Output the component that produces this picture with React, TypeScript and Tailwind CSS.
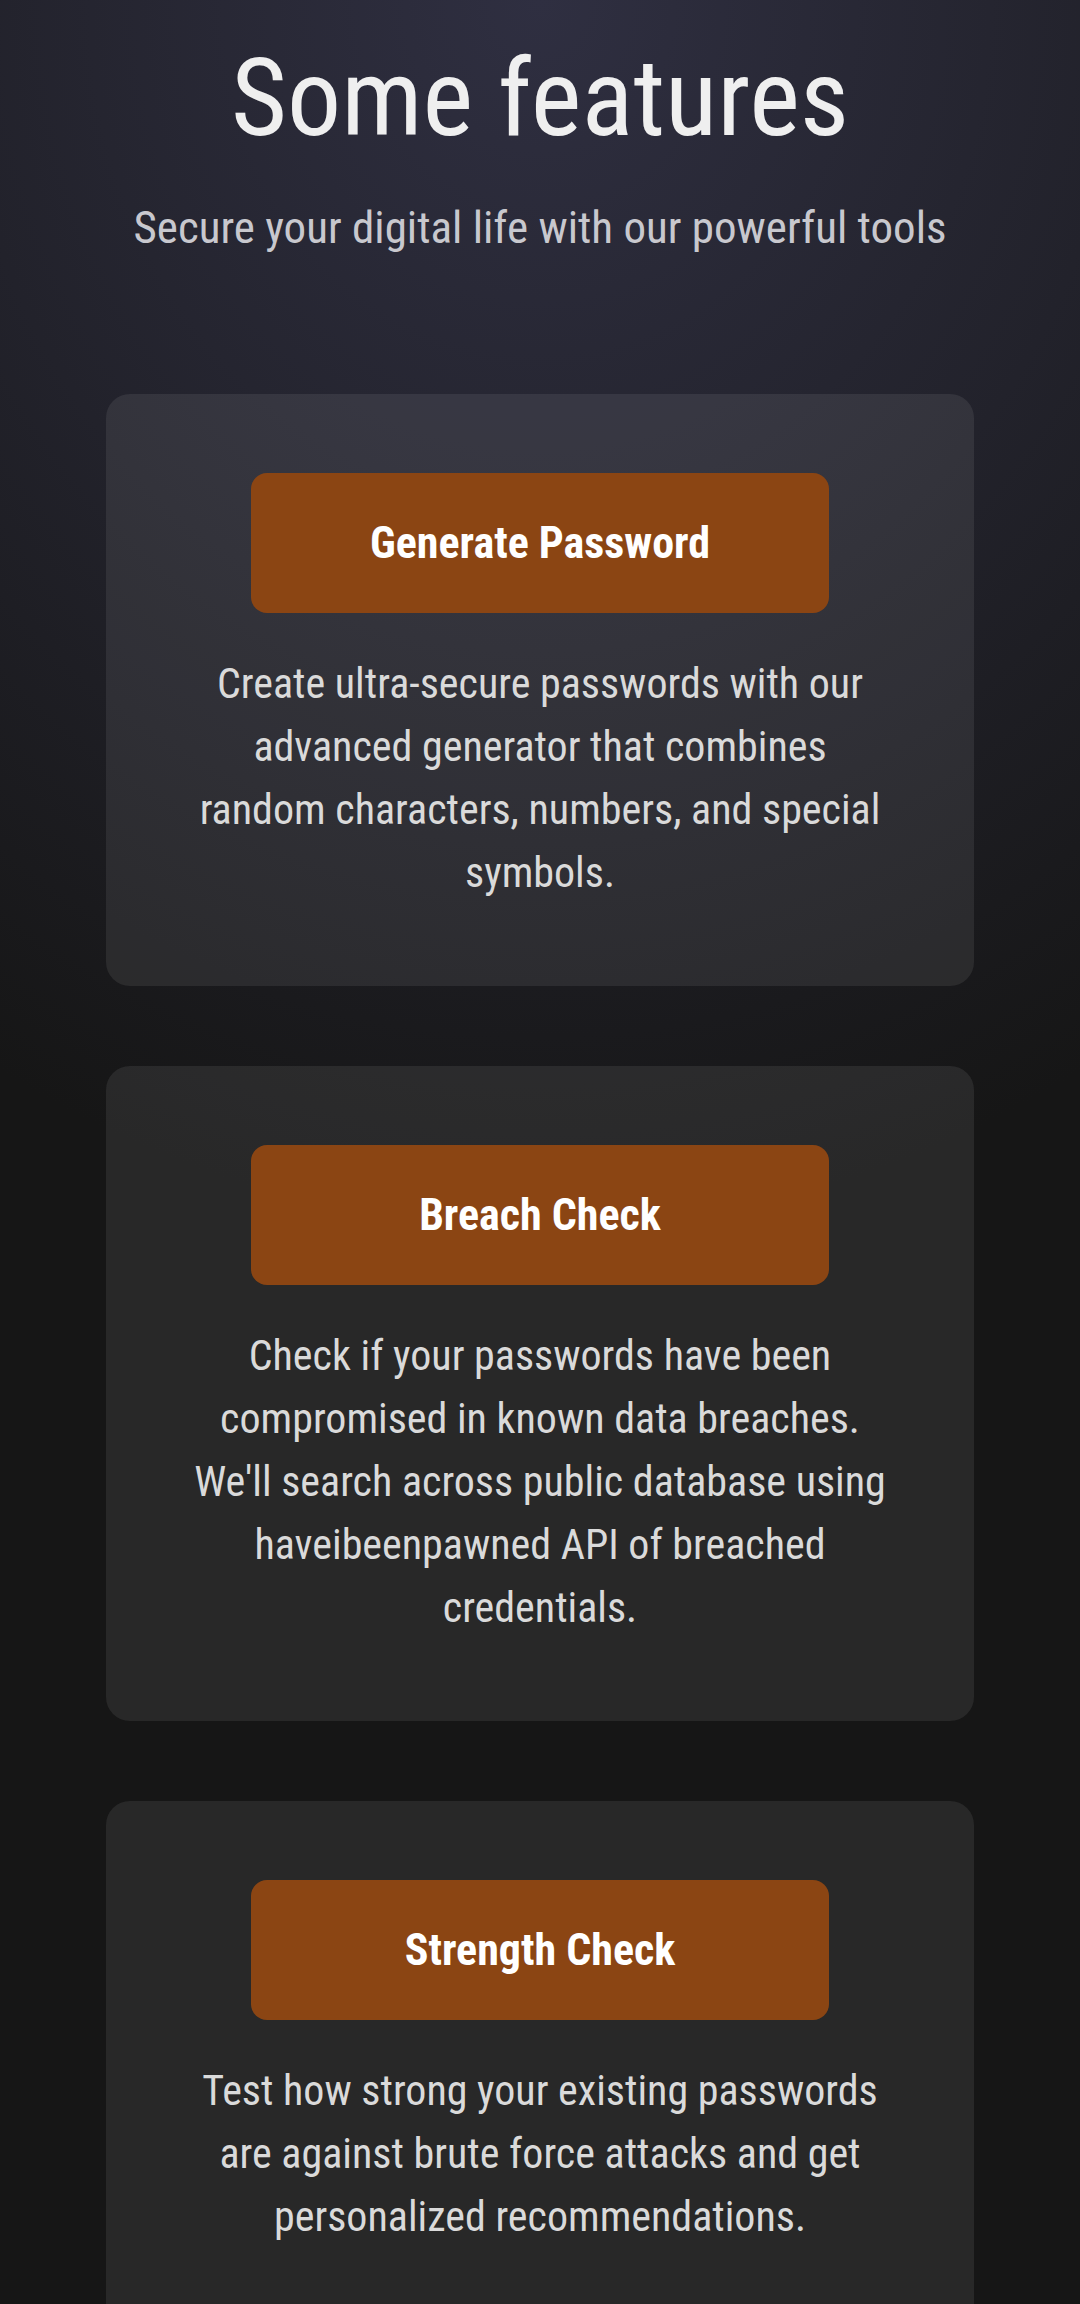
const features = [
  {
    title: 'Generate Password',
    description:
      'Create ultra-secure passwords with our advanced generator that combines random characters, numbers, and special symbols.',
  },
  {
    title: 'Breach Check',
    description:
      "Check if your passwords have been compromised in known data breaches. We'll search across public database using haveibeenpawned API of breached credentials.",
  },
  {
    title: 'Strength Check',
    description:
      'Test how strong your existing passwords are against brute force attacks and get personalized recommendations.',
  },
];

export default function App() {
  return (
    <section className="min-h-[2304px] bg-[#151515] bg-[radial-gradient(ellipse_120%_60%_at_50%_0%,#2f2f41_0%,#22222b_45%,#161616_85%)] font-['Roboto_Condensed',Roboto,sans-serif] font-stretch-condensed pb-20">
      <h1 className="pt-[44px] text-center text-[108px] leading-none font-normal text-[#efefef]">
        Some features
      </h1>
      <p className="mt-[44px] text-center text-[45px] leading-[63px] text-[#c8c8ce]">
        Secure your digital life with our powerful tools
      </p>

      <div className="mt-[135px] flex flex-col gap-[80px] px-[106px]">
        {features.map((f) => (
          <div
            key={f.title}
            className="flex flex-col items-center rounded-3xl bg-white/[0.08] pt-[79px] pb-[82px]"
          >
            <button className="flex h-[140px] w-[578px] items-center justify-center rounded-2xl bg-[#8b4513] text-[44px] font-bold text-white">
              {f.title}
            </button>
            <p className="mt-[39px] w-[694px] text-center text-[42px] leading-[63px] text-[#dadada]">
              {f.description}
            </p>
          </div>
        ))}
      </div>
    </section>
  );
}
